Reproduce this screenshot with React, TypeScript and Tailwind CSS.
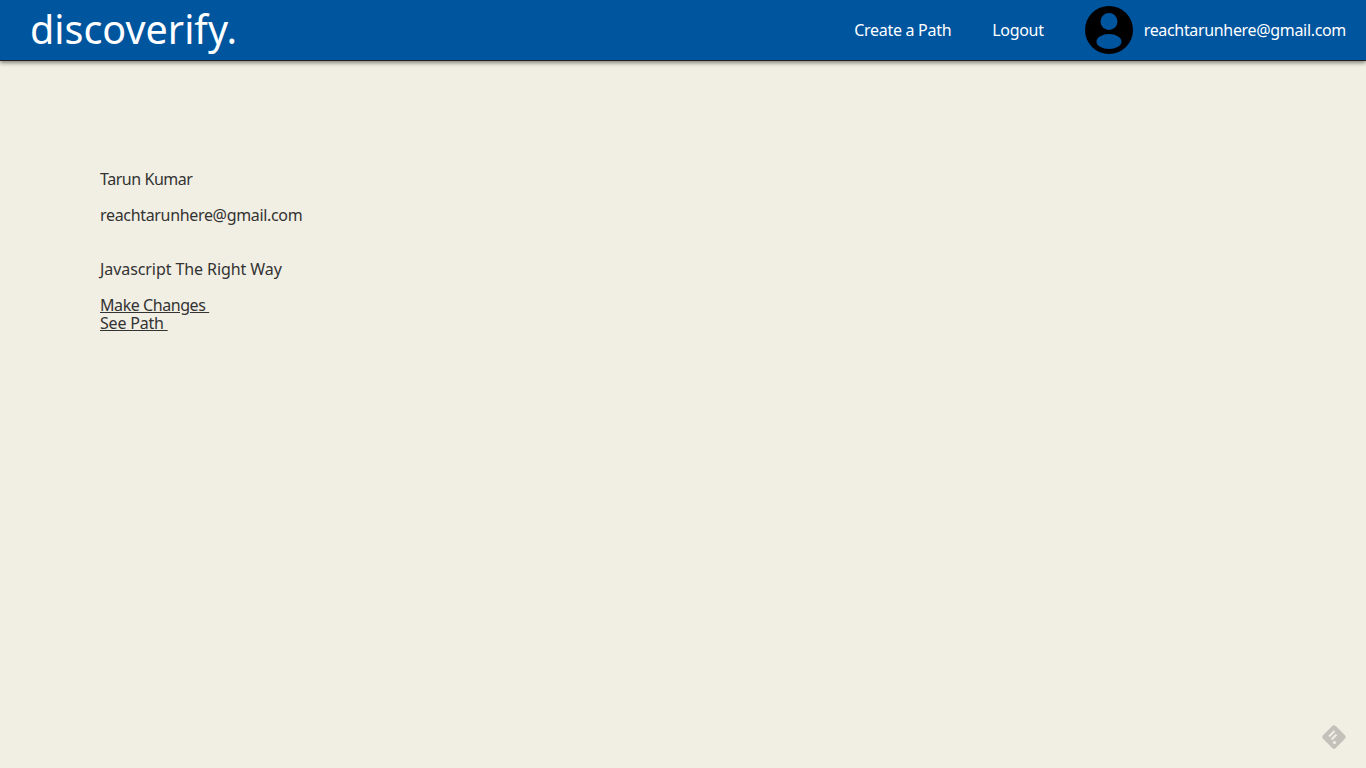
import React from "react";

function Avatar() {
  return (
    <svg width="48" height="48" viewBox="0 0 48 48" className="shrink-0">
      <circle cx="24" cy="24" r="24" fill="#000" />
      <circle cx="24" cy="15.5" r="8.5" fill="#00559f" />
      <ellipse cx="24" cy="35.5" rx="12.5" ry="7.5" fill="#00559f" />
    </svg>
  );
}

function FeedbackIcon() {
  return (
    <svg width="26" height="26" viewBox="0 0 26 26">
      <rect x="4" y="4" width="18" height="18" rx="2.5" fill="#c2c2bb" transform="rotate(45 13 13)" />
      <path d="M8 12.5 L13.5 7 M10.5 15.5 L15.5 10.5" stroke="#f1eee3" strokeWidth="2" fill="none" />
      <circle cx="13.5" cy="18.5" r="1.6" fill="#f1eee3" />
    </svg>
  );
}

export default function App() {
  return (
    <div className="relative min-h-[768px] overflow-hidden bg-[#f1eee3] font-['Noto_Sans',sans-serif] text-base text-[#333]">
      <header className="flex h-[60px] items-center justify-between bg-[#00559f] pl-[30px] pr-5 text-white shadow-[0_1px_0_#222,0_3px_4px_rgba(0,0,0,0.45)]">
        <a className="text-[39.5px] leading-none" href="#">
          discoverify.
        </a>
        <nav className="flex items-center">
          <a className="mr-[41px] tracking-[-0.3px]" href="#">
            Create a Path
          </a>
          <a className="mr-[41px] tracking-[-0.3px]" href="#">
            Logout
          </a>
          <Avatar />
          <span className="ml-[11px] tracking-[-0.33px]">reachtarunhere@gmail.com</span>
        </nav>
      </header>
      <main className="px-[100px] pt-[110px] leading-[18px]">
        <p className="tracking-[-0.45px]">Tarun Kumar</p>
        <p className="mt-[18px] tracking-[-0.33px]">reachtarunhere@gmail.com</p>
        <p className="mt-9 tracking-[-0.08px]">Javascript The Right Way</p>
        <a className="mt-[18px] block w-fit tracking-[-0.43px] underline" href="#">
          Make Changes&nbsp;
        </a>
        <a className="block w-fit tracking-[-0.2px] underline" href="#">
          See Path&nbsp;
        </a>
      </main>
      <div className="absolute right-[19px] bottom-[18px]">
        <FeedbackIcon />
      </div>
    </div>
  );
}
